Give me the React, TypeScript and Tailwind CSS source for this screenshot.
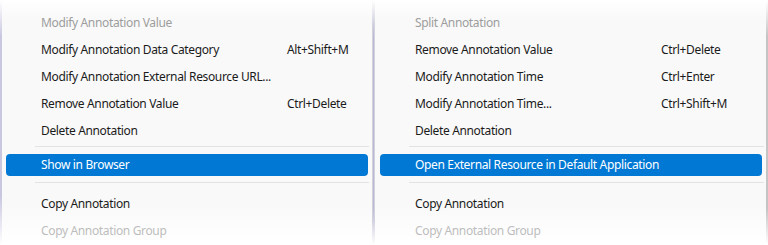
//--------------------------------------------------------------------//
// Types

type Item = {
  label: string;
  shortcut?: string;
  disabled?: boolean;
  faded?: boolean;
};

//--------------------------------------------------------------------//
// Constants

const leftTop: Item[] = [
  { label: 'Modify Annotation Value', disabled: true },
  { label: 'Modify Annotation Data Category', shortcut: 'Alt+Shift+M' },
  { label: 'Modify Annotation External Resource URL...' },
  { label: 'Remove Annotation Value', shortcut: 'Ctrl+Delete' },
  { label: 'Delete Annotation' }
];

const rightTop: Item[] = [
  { label: 'Split Annotation', disabled: true },
  { label: 'Remove Annotation Value', shortcut: 'Ctrl+Delete' },
  { label: 'Modify Annotation Time', shortcut: 'Ctrl+Enter' },
  { label: 'Modify Annotation Time...', shortcut: 'Ctrl+Shift+M' },
  { label: 'Delete Annotation' }
];

//--------------------------------------------------------------------//
// Components

/**
 * Single menu row
 */
function Row({ item, pad }: { item: Item, pad: string }) {
  const color = item.faded
    ? 'text-[#bdbdbd]'
    : item.disabled ? 'text-[#9d9d9d]' : 'text-[#1b1b1b]';
  return (
    <div className={`flex items-center h-[27px] ${pad} ${color}`}>
      <span className="w-[246px] shrink-0 whitespace-nowrap">{item.label}</span>
      <span className="whitespace-nowrap">{item.shortcut}</span>
    </div>
  );
}

/**
 * Context menu panel
 */
function Panel(props: {
  items: Item[],
  active: string,
  width: string,
  pad: string,
  hlPad: string,
  hlMargin: string,
  sepMargin: string
}) {
  const { items, active, width, pad, hlPad, hlMargin, sepMargin } = props;
  return (
    <div className={
      `${width} shrink-0 h-full pt-[9px] `
      + 'bg-[linear-gradient(to_bottom,#ffffff_0px,#f9f9f9_18px,#f9f9f9_205px,#ffffff_245px)]'
    }>
      {items.map(item => (
        <Row key={item.label} item={item} pad={pad} />
      ))}
      <div className={`mt-[2px] h-px bg-[#e3e3e3] ${sepMargin}`}></div>
      <div className={
        `mt-[7px] h-[22px] flex items-center rounded-[4px] bg-[#0078d4] `
        + `text-white whitespace-nowrap ${hlMargin} ${hlPad}`
      }>
        {active}
      </div>
      <div className={`mt-[6px] h-px bg-[#e3e3e3] ${sepMargin}`}></div>
      <div className="mt-[7px]">
        <Row item={{ label: 'Copy Annotation' }} pad={pad} />
        <Row item={{ label: 'Copy Annotation Group', faded: true }} pad={pad} />
      </div>
    </div>
  );
}

/**
 * Main page component
 */
export default function App() {
  return (
    <div className={
      'flex w-[768px] h-[245px] overflow-hidden bg-white text-[12px] '
      + "tracking-[-0.35px] font-['Noto_Sans','Liberation_Sans',sans-serif]"
    }>
      <div className="w-[2px] shrink-0 bg-[linear-gradient(to_bottom,#ffffff,#c9c7e0_15%,#c9c7e0_80%,#ffffff)]"></div>
      <Panel
        items={leftTop}
        active="Show in Browser"
        width="w-[370px]"
        pad="pl-[39px]"
        hlPad="pl-[35px]"
        hlMargin="ml-[4px] mr-[4px]"
        sepMargin="ml-[33px] mr-[3px]"
      />
      <div className="w-[3px] shrink-0 flex bg-[linear-gradient(to_bottom,#ffffff,#d2d2dc_10%,#d2d2dc_90%,#ffffff)]">
        <div className="w-px h-full bg-[linear-gradient(to_bottom,#ffffff,#b9b7d6_15%,#b9b7d6_85%,#ffffff)] ml-px"></div>
      </div>
      <Panel
        items={rightTop}
        active="Open External Resource in Default Application"
        width="w-[391px]"
        pad="pl-[40px]"
        hlPad="pl-[35px]"
        hlMargin="ml-[5px] mr-[4px]"
        sepMargin="ml-[34px] mr-[2px]"
      />
      <div className="w-[2px] shrink-0 bg-[linear-gradient(to_bottom,#ffffff,#c4c4c4_15%,#c4c4c4_85%,#ffffff)]"></div>
    </div>
  );
}
